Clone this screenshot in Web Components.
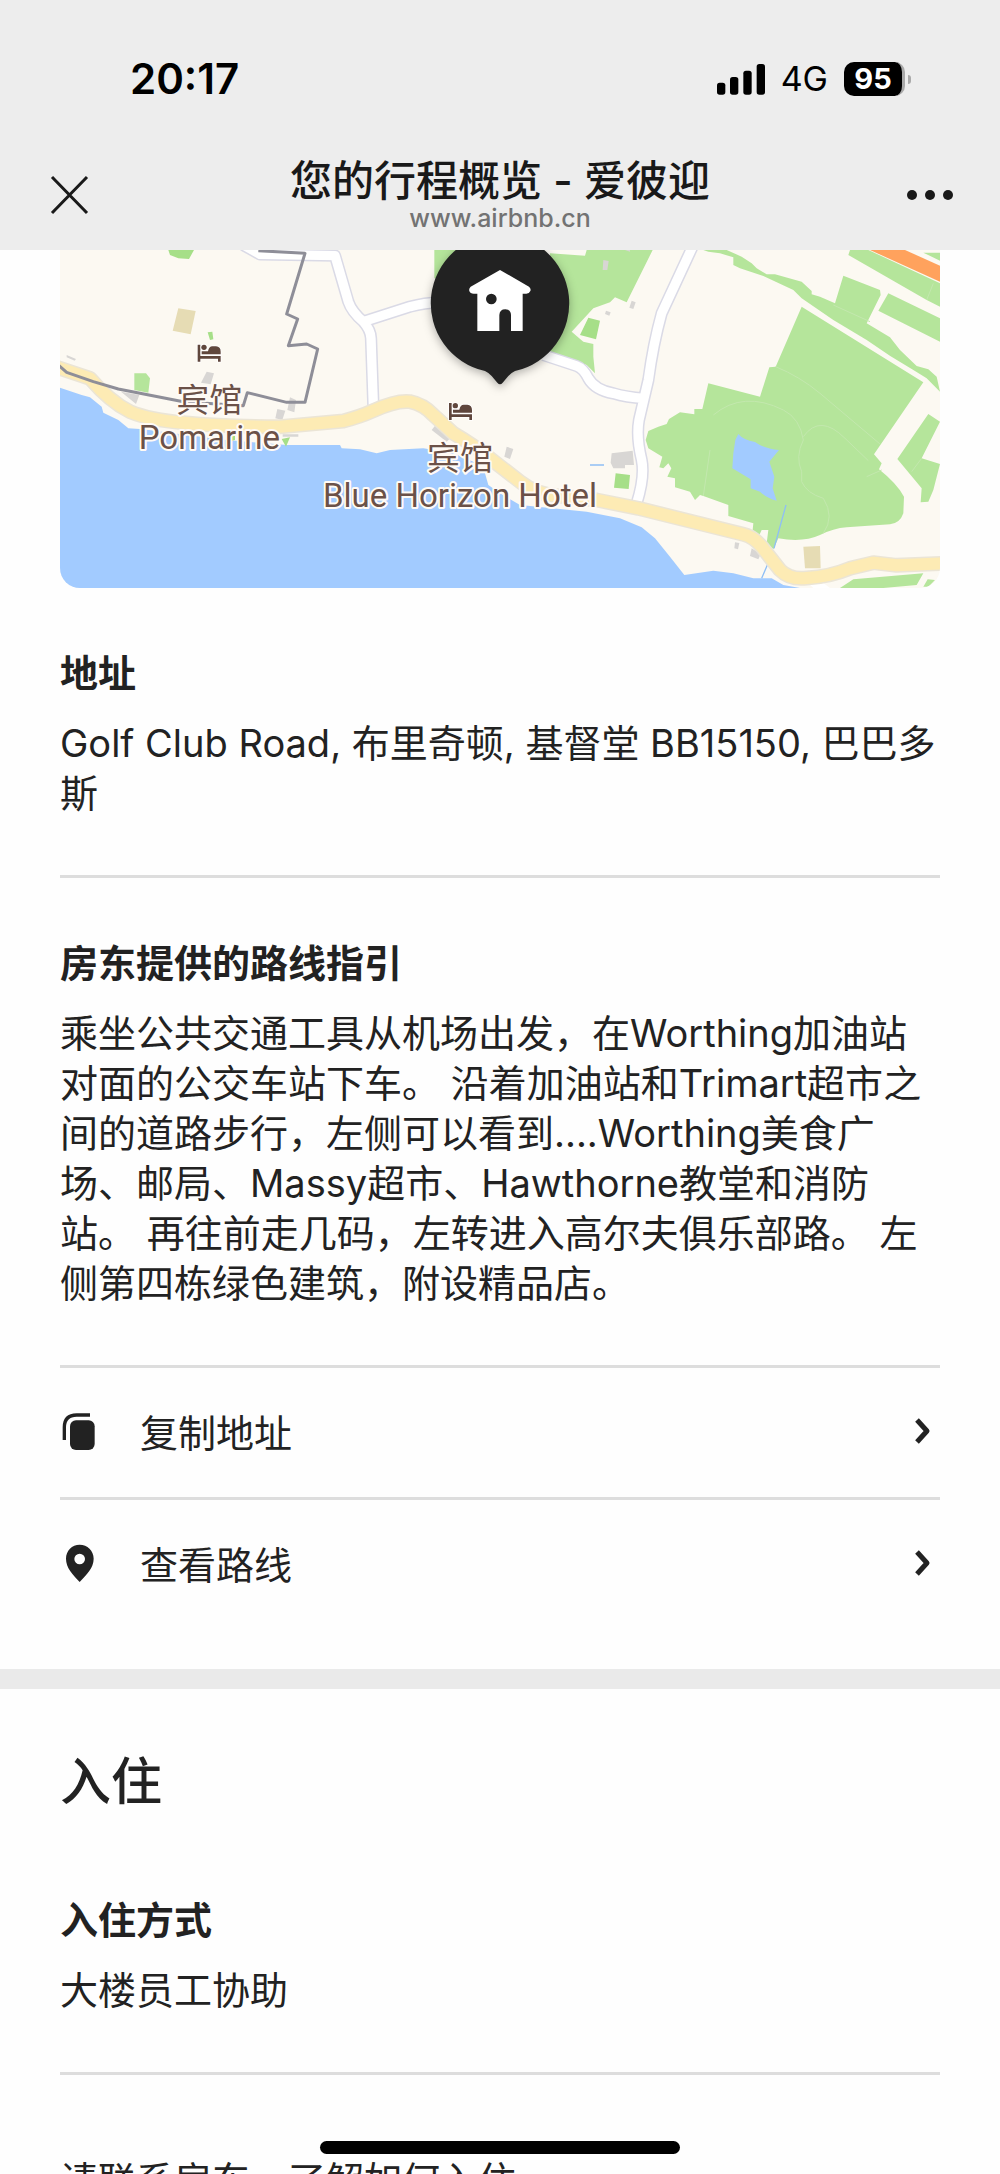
<!DOCTYPE html>
<html lang="zh-CN">
<head>
<meta charset="utf-8">
<meta name="viewport" content="width=device-width, initial-scale=1">
<title>您的行程概览 - 爱彼迎</title>
<style>
    body {
        margin: 0;
        background: #fefefe;
        color: #222;
        font-family: Inter, "Noto Sans CJK SC", sans-serif;
        font-size: 38px;
        line-height: 50px;
        text-spacing-trim: space-all;
    }
</style>
</head>
<body>

<trip-app>
    <status-bar slot="header" data-time="20:17" data-network="4G" data-battery="95"></status-bar>
    <nav-bar slot="header">
        您的行程概览 - 爱彼迎
        <span slot="site">www.airbnb.cn</span>
    </nav-bar>

    <trip-panel>
        <trip-map></trip-map>
        <info-block>
            <span slot="title">地址</span>
            Golf Club Road, 布里奇顿, 基督堂 BB15150, 巴巴多斯
        </info-block>
        <info-block>
            <span slot="title">房东提供的路线指引</span>
            乘坐公共交通工具从机场出发，在Worthing加油站对面的公交车站下车。 沿着加油站和Trimart超市之间的道路步行，左侧可以看到....Worthing美食广场、邮局、Massy超市、Hawthorne教堂和消防站。 再往前走几码，左转进入高尔夫俱乐部路。 左侧第四栋绿色建筑，附设精品店。
        </info-block>
        <action-row>
            <svg slot="icon" viewBox="60 60 114 126" width="38" height="42" aria-hidden="true">
                <path d="M73 150V112Q73 75 110 75H150" fill="none" stroke="#222" stroke-width="10"/>
                <rect x="90" y="91" width="74" height="89" rx="18" fill="#222"/>
            </svg>
            复制地址
        </action-row>
        <action-row data-href="#directions">
            <svg slot="icon" viewBox="60 458 114 126" width="38" height="42" aria-hidden="true">
                <path fill="#222" fill-rule="evenodd" d="M119 466C96 466 78 484 78 508C78 535 98 556 119 578C140 556 161 535 161 508C161 484 142 466 119 466ZM119 493A16 16 0 1 1 119 525A16 16 0 1 1 119 493Z"/>
            </svg>
            查看路线
        </action-row>
    </trip-panel>

    <trip-panel data-heading="入住">
        <info-block>
            <span slot="title">入住方式</span>
            大楼员工协助
        </info-block>
        <contact-note>请联系房东，了解如何入住</contact-note>
    </trip-panel>
</trip-app>

<script>
const attach = (element, html) => {
    const template = document.createElement('template')
    template.innerHTML = html
    element.attachShadow({ mode: 'open' }).appendChild(template.content.cloneNode(true))
}

window.customElements.define('trip-app', class extends HTMLElement {

    constructor() {
        super()
        attach(this, `
            <style>
                :host {
                    display: flex;
                    flex-direction: column;
                    height: 100vh;
                    overflow: hidden;
                    position: relative;
                }
                header {
                    flex: none;
                    background: #ededed;
                }
                main {
                    flex: 1;
                    min-height: 0;
                    overflow: hidden;
                }
                .home {
                    position: absolute;
                    left: 0;
                    right: 0;
                    bottom: 20px;
                    width: 36%;
                    height: 13px;
                    margin: 0 auto;
                    border-radius: 7px;
                    background: #000;
                }
            </style>
            <header><slot name="header"></slot></header>
            <main><slot></slot></main>
            <div class="home"></div>
        `)
    }

})

window.customElements.define('status-bar', class extends HTMLElement {

    constructor() {
        super()
        attach(this, `
            <style>
                :host {
                    display: flex;
                    align-items: center;
                    justify-content: space-between;
                    height: 158px;
                    padding: 0 89px 0 130px;
                    color: #000;
                }
                time {
                    font-size: 42px;
                    font-weight: 600;
                }
                .right {
                    display: flex;
                    align-items: center;
                    gap: 16px;
                }
                .network {
                    font-size: 34px;
                }
                .battery {
                    display: flex;
                    align-items: center;
                    gap: 3px;
                }
                .level {
                    width: 58px;
                    height: 34px;
                    border-radius: 10px;
                    border-right: 3px solid #aaa;
                    background: #000;
                    color: #fff;
                    font-size: 29px;
                    font-weight: 700;
                    line-height: 34px;
                    text-align: center;
                }
                .tip {
                    width: 3px;
                    height: 9px;
                    border-radius: 0 4px 4px 0;
                    background: #aaa;
                }
                svg {
                    display: block;
                }
            </style>
            <time>${this.dataset.time}</time>
            <div class="right">
                <svg viewBox="52 42 144 93" width="48" height="31" aria-hidden="true">
                    <rect x="52" y="98" width="25" height="36" rx="8"/>
                    <rect x="91" y="81" width="25" height="53" rx="8"/>
                    <rect x="131" y="62" width="25" height="72" rx="8"/>
                    <rect x="171" y="42" width="25" height="92" rx="8"/>
                </svg>
                <span class="network">${this.dataset.network}</span>
                <div class="battery">
                    <div class="level">${this.dataset.battery}</div>
                    <div class="tip"></div>
                </div>
            </div>
        `)
    }

})

window.customElements.define('nav-bar', class extends HTMLElement {

    constructor() {
        super()
        attach(this, `
            <style>
                :host {
                    display: grid;
                    grid-template-columns: 48px 1fr 48px;
                    align-items: center;
                    padding: 0 46px 18px;
                    color: #191919;
                }
                button {
                    padding: 0;
                    border: 0;
                    background: none;
                    width: 48px;
                    height: 48px;
                }
                svg {
                    display: block;
                }
                .title {
                    text-align: center;
                }
                h1 {
                    margin: 0;
                    font-size: 42px;
                    font-weight: 500;
                    line-height: 46px;
                }
                .site {
                    color: #737373;
                    font-size: 25px;
                    font-weight: 500;
                    line-height: 28px;
                }
            </style>
            <button aria-label="关闭">
                <svg viewBox="0 0 48 48" width="48" height="48"><path d="M6 6L41 42M41 6L6 42" fill="none" stroke="#191919" stroke-width="3"/></svg>
            </button>
            <div class="title">
                <h1><slot></slot></h1>
                <div class="site"><slot name="site"></slot></div>
            </div>
            <button aria-label="更多">
                <svg viewBox="0 0 48 48" width="48" height="48" fill="#191919"><circle cx="6" cy="24" r="5"/><circle cx="24" cy="24" r="5"/><circle cx="42" cy="24" r="5"/></svg>
            </button>
        `)
    }

})

window.customElements.define('trip-panel', class extends HTMLElement {

    constructor() {
        super()
        attach(this, `
            <style>
                :host {
                    display: block;
                    padding: 0 60px 40px;
                }
                :host([data-heading]) {
                    padding-top: 60px;
                    border-top: 20px solid #eaeaea;
                }
                h2 {
                    margin: 0 0 20px;
                    font-size: 51px;
                    font-weight: 500;
                    line-height: 66px;
                }
            </style>
            ${this.dataset.heading ? `<h2>${this.dataset.heading}</h2>` : ''}
            <slot></slot>
        `)
    }

})

window.customElements.define('info-block', class extends HTMLElement {

    constructor() {
        super()
        attach(this, `
            <style>
                :host {
                    display: block;
                    padding: 60px 0 57px;
                    border-bottom: 3px solid #ddd;
                }
                h3 {
                    margin: 0 0 20px;
                    font-size: 38px;
                    font-weight: 700;
                    line-height: 50px;
                }
                p {
                    margin: 0;
                }
            </style>
            <h3><slot name="title"></slot></h3>
            <p><slot></slot></p>
        `)
    }

})

window.customElements.define('action-row', class extends HTMLElement {

    constructor() {
        super()
        const tag = this.dataset.href ? 'a' : 'button'
        const target = this.dataset.href ? `href="${this.dataset.href}"` : ''
        attach(this, `
            <style>
                :host {
                    display: block;
                }
                :host(:not(:last-child)) {
                    border-bottom: 3px solid #ddd;
                }
                a, button {
                    box-sizing: border-box;
                    display: flex;
                    align-items: center;
                    width: 100%;
                    padding: 40px 8px 39px 0;
                    border: 0;
                    background: none;
                    color: inherit;
                    font: inherit;
                    text-align: left;
                    text-decoration: none;
                }
                .label {
                    flex: 1;
                    margin-left: 42px;
                }
                svg, ::slotted(svg) {
                    display: block;
                    margin-bottom: 4px;
                }
            </style>
            <${tag} ${target}>
                <slot name="icon"></slot>
                <span class="label"><slot></slot></span>
                <svg viewBox="0 0 20 30" width="20" height="30" aria-hidden="true"><path d="M5 4L15 15L5 26" fill="none" stroke="#222" stroke-width="5" stroke-linejoin="round"/></svg>
            </${tag}>
        `)
    }

})

window.customElements.define('contact-note', class extends HTMLElement {

    constructor() {
        super()
        attach(this, `
            <style>
                :host {
                    display: block;
                    padding-top: 80px;
                }
            </style>
            <slot></slot>
        `)
    }

})

window.customElements.define('trip-map', class extends HTMLElement {

    constructor() {
        super()
        attach(this, `
            <style>
                :host {
                    display: block;
                    overflow: hidden;
                    border-radius: 0 0 20px 20px;
                    background: #fcf9f2;
                }
                svg {
                    display: block;
                    width: 100%;
                    height: auto;
                }
                .park { fill: #b5e59b; }
                .grove { fill: #a6df88; }
                .water { fill: #a2cbff; }
                .building { fill: #d8d6d4; }
                .sand { fill: #e6dcb4; }
                .line { fill: none; stroke-linejoin: round; }
                .label {
                    fill: #6b5148;
                    stroke: #fffaf5;
                    stroke-width: 12px;
                    stroke-linejoin: round;
                    paint-order: stroke;
                    text-anchor: middle;
                    font-family: Roboto, "Noto Sans CJK SC", sans-serif;
                    font-size: 99px;
                }
                .pin { filter: drop-shadow(0 8px 14px rgba(0, 0, 0, .3)); }
            </style>
            <svg viewBox="60 30 2640 1014" role="img" aria-label="地图">
                <defs>
                    <path id="lanes" d="M610 15L660 43L885 47L925 185Q935 215 970 245Q992 270 993 295L1000 495M970 245L1110 200Q1160 186 1210 188M1510 345L1610 378Q1630 385 1645 415Q1665 450 1720 460Q1760 472 1810 475M1960 15L1865 220Q1840 310 1825 420L1797 540Q1788 590 1805 660Q1815 710 1790 790"/>
                    <path id="coast" d="M50 382L150 415Q210 485 270 515Q330 540 430 548Q560 560 720 560L910 543Q960 530 1000 512Q1070 480 1110 485Q1150 493 1180 525L1240 580Q1300 615 1350 655L1440 725Q1490 765 1560 768L1670 780L1795 805L2110 883Q2140 890 2165 920L2220 990Q2250 1020 2300 1014Q2370 1010 2430 985L2500 968L2570 976L2710 970"/>
                    <g id="bed">
                        <path d="M0 1H8V35H69V52H61V43H8V52H0Z"/>
                        <circle cx="19" cy="9" r="8"/>
                        <path d="M12 21H31Q34 6 44 6H55Q69 7 69 22V30H12Z"/>
                    </g>
                </defs>

                <path class="water" d="M60 443L125 465L150 472L185 500L190 518L235 540L265 565L310 568L400 580L560 600L740 615L900 615L905 625L960 628L1010 640L1050 630L1150 625L1240 640L1300 665L1335 700L1345 735L1380 760L1440 795L1640 815L1740 835L1805 862L1845 895Q1890 950 1933 1005L2020 992L2080 1000L2140 1015L2195 1015L2230 1035L2280 1044H60Z"/>

                <path class="grove" d="M385 30H462L447 57L415 55L390 45ZM503 277L517 275L520 298L510 300ZM725 597L750 592L738 620ZM570 585L585 583V600L565 605Z"/>
                <path class="park" d="M283 400L318 400L330 415L325 458L283 450ZM1183 30H1260V115H1183Z"/>
                <path class="sand" d="M415 205L467 213L452 283L398 272Z"/>
                <path class="building" d="M500 395L522 400L512 433L483 428ZM243 455L298 465L288 492ZM712 507L736 512L727 540L706 535ZM750 472L768 480L763 517L742 510ZM728 583H775V590H728ZM1185 557L1235 590L1220 605L1175 570ZM1400 620L1420 627L1410 657L1393 650ZM80 345L108 357L104 362L80 352Z"/>

                <g transform="translate(1380 0)">
                    <path class="park" d="M150 40L255 47L260 30H458L380 187L345 172L330 187L280 205L215 275L250 305L280 312V350L285 400L260 375L150 335Z"/>
                    <path class="grove" d="M265 233L300 242L288 298L240 285ZM347 700L390 705L386 747L342 743Z"/>
                    <path class="park" d="M905 200L1270 427L1122 643L1145 670L1137 688Q1190 730 1212 770L1210 820Q1200 850 1170 853L1040 862Q1000 865 960 885Q910 908 835 895L820 928L800 910L805 870L785 870L778 885L758 870L760 850L685 828V795L610 768L600 765L585 780L570 755L525 742V715L502 710L514 685L505 670L490 685L478 682L487 650L445 625L437 600L445 573L475 560L500 552L507 537L540 517L583 523V507H607L625 430L780 470L808 382L827 380Z"/>
                    <path class="water" d="M715 582Q730 600 765 606Q790 625 837 630L808 665L823 710L818 745L830 782Q800 775 780 755L752 745V718L697 685L700 640L706 600Z"/>
                    <path class="park" d="M610 30H680L725 50L755 70L770 85L800 103L825 103L905 125L935 153L935 163L960 170L1005 190L1030 107L1140 150L1142 165L1100 250L1170 292L1200 330L1250 378L1285 388L1310 410L1320 455L1280 415L1240 390Q1170 350 1100 300L1000 240L905 175L880 150L790 108L720 85L700 75V52L660 40L625 35ZM1050 30H1105L1320 130V200L1280 180L1045 45ZM1165 160L1320 235V305L1135 212ZM1270 38H1320V62ZM1285 522L1320 545L1265 655L1320 672L1300 750L1285 785L1262 787L1265 745L1192 657ZM1020 1044L1060 1018L1270 1000L1250 1035L1150 1044ZM1283 1018L1305 1020L1285 1040H1270Z"/>
                    <path d="M1110 30H1215L1320 77V125Z" fill="#ffa25d"/>
                    <path class="sand" d="M910 920L960 918L962 985H915Z"/>
                    <path class="building" d="M310 60L326 63L322 90L308 90ZM395 182L407 187L400 207L388 203ZM318 212L332 217L328 227L315 222ZM335 640L398 632L402 675H375V685H340L332 668ZM705 907L718 909L714 928L703 925ZM755 925L782 943L775 958L750 948ZM375 30H390V35Z"/>
                    <path class="line" d="M270 675H312M858 795L822 925M802 975L785 1015" stroke="#8fbff5" stroke-width="4"/>
                    <path class="line" d="M640 525Q730 450 850 510Q900 535 910 600Q885 650 905 695V725Q920 760 970 775Q1005 830 970 880M827 380Q900 410 960 460L1140 612M910 590Q960 520 1035 595L1105 662M630 630L610 768M1000 195L1110 245M1300 130L1280 180M1265 655L1235 695M1145 690L1100 710" stroke="#c3e8ae" stroke-width="3"/>
                    <path d="M925 1030L965 1025L990 1044H940Z" fill="#fff"/>
                </g>

                <use href="#lanes" class="line" stroke="#dadae6" stroke-width="37"/>
                <use href="#lanes" class="line" stroke="#fff" stroke-width="28"/>
                <use href="#coast" class="line" stroke="#ebe5d6" stroke-width="45"/>
                <use href="#coast" class="line" stroke="#fdebb4" stroke-width="36"/>
                <path class="line" d="M55 375L80 397L160 425L235 447L430 485L610 497L622 458L740 487L795 487L833 327L800 312L745 317L773 237L740 222L795 40L655 32" stroke="#8e8e98" stroke-width="9"/>

                <use href="#bed" transform="translate(473 313)" fill="#5f463c" stroke="#fff" stroke-width="5" paint-order="stroke"/>
                <use href="#bed" transform="translate(1227 488)" fill="#5f463c" stroke="#fff" stroke-width="5" paint-order="stroke"/>
                <text class="label" x="508" y="516">宾馆</text>
                <text class="label" x="508" y="627">Pomarine</text>
                <text class="label" x="1260" y="691">宾馆</text>
                <text class="label" x="1260" y="801">Blue Horizon Hotel</text>

                <path class="pin" fill="#222" d="M1380 -18A208 208 0 0 1 1425 393Q1415 397 1405 408L1388 428Q1380 438 1372 428L1355 408Q1345 397 1335 393A208 208 0 0 1 1380 -18Z"/>
                <path fill="#fff" fill-rule="evenodd" d="M1380 90L1467 140Q1474 146 1471 153Q1468 161 1459 161H1448V273H1413V225Q1412 208 1396 208Q1379 208 1378 225V273H1312V161H1301Q1291 161 1288 153Q1286 146 1292 140ZM1354 161A16 16 0 1 0 1354 193A16 16 0 1 0 1354 161Z"/>
            </svg>
        `)
    }

})
</script>
</body>
</html>
